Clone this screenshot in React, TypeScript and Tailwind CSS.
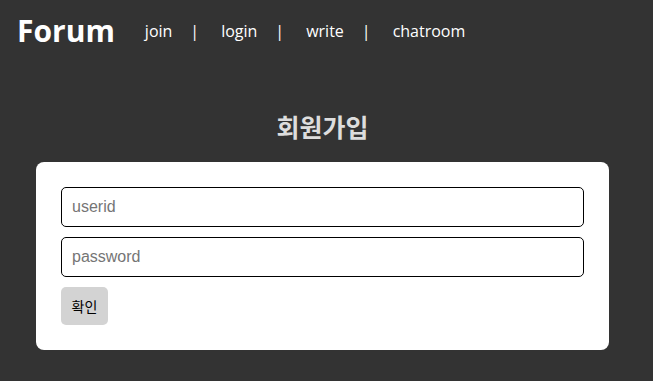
import React from 'react';

const App: React.FC = () => {
  const links = ['join', 'login', 'write', 'chatroom'];
  return (
    <div className="min-h-[381px] w-full bg-[#333333] font-['Open_Sans','Noto_Sans_CJK_KR',sans-serif]">
      {/* header */}
      <nav className="flex items-center h-[62px] pl-[17px]">
        <span className="text-[30px] font-bold text-white leading-none mr-[30px]">Forum</span>
        {links.map((l, i) => (
          <React.Fragment key={l}>
            <a className="text-[16px] text-white leading-none">{l}</a>
            {i < links.length - 1 && <span className="text-[16px] text-white leading-none ml-[18px] mr-[22px]">|</span>}
          </React.Fragment>
        ))}
      </nav>

      <div className="pl-[36px] pr-[44px] pt-[48px]">
        <h2 className="text-center text-[25px] font-bold text-[#dddddd] leading-[32px] font-['Noto_Sans_CJK_KR',sans-serif] mb-[20px]">
          회원가입
        </h2>
        <div className="bg-white rounded-[8px] p-[25px] flex flex-col gap-[10px]">
          <input
            placeholder="userid"
            className="h-[40px] w-full border border-black rounded-[5px] px-[10px] text-[16px] font-['Liberation_Sans',sans-serif] placeholder:text-[#757575] outline-none"
          />
          <input
            type="password"
            placeholder="password"
            className="h-[40px] w-full border border-black rounded-[5px] px-[10px] text-[16px] font-['Liberation_Sans',sans-serif] placeholder:text-[#757575] outline-none"
          />
          <div>
            <button className="h-[38px] w-[47px] bg-[#d3d3d3] rounded-[5px] text-[14px] text-black font-['Noto_Sans_CJK_KR',sans-serif]">
              확인
            </button>
          </div>
        </div>
      </div>
    </div>
  );
};

export default App;
